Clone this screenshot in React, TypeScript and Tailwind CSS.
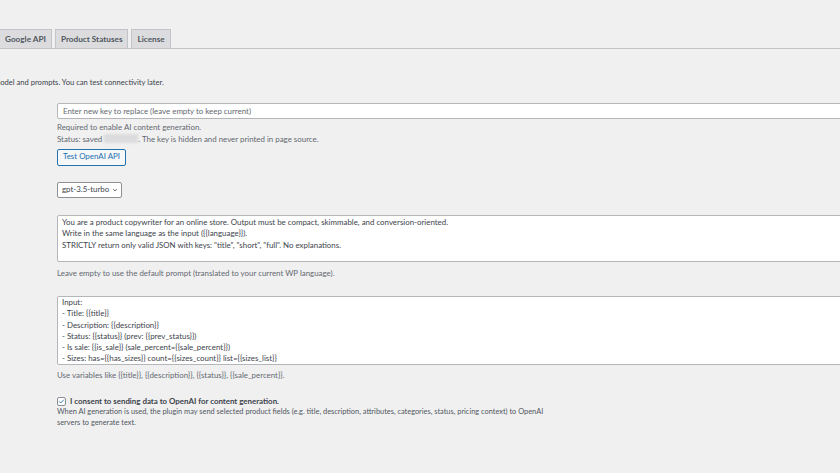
import React from "react";

const font = { fontFamily: 'Lato, "Noto Sans", sans-serif' };

function Tabs() {
  const tabs = ["Google API", "Product Statuses", "License"];
  return (
    <div className="flex gap-[3px] border-b border-[#c3c4c7] pt-[29px]">
      {tabs.map((t, i) => (
        <div
          key={t}
          className={`h-[20px] -mb-px flex items-center border border-[#c3c4c7] bg-[#dcdcde] px-[5px] text-[8.2px] font-bold leading-none text-[#50575e] ${
            i === 0 ? "-ml-px" : ""
          }`}
        >
          {t}
        </div>
      ))}
    </div>
  );
}

function Checkbox() {
  return (
    <span className="mt-[1px] flex h-[9px] w-[9px] shrink-0 items-center justify-center rounded-[2px] border border-[#8c8f94] bg-white">
      <svg viewBox="0 0 20 20" className="h-[9px] w-[9px]">
        <path d="M4 10.5l3.8 3.8L16 5.5" fill="none" stroke="#2271b1" strokeWidth={2.6} strokeLinecap="round" strokeLinejoin="round" />
      </svg>
    </span>
  );
}

export default function App() {
  return (
    <div className="h-[473px] w-[840px] overflow-hidden bg-[#f0f0f1] text-[#3c434a]" style={font}>
      <Tabs />

      <p className="-ml-[6px] mt-[28px] text-[7.6px] leading-[11px]">
        model and prompts. You can test connectivity later.
      </p>

      <div className="pl-[57px]">
        {/* API key */}
        <input
          type="password"
          placeholder="Enter new key to replace (leave empty to keep current)"
          className="mt-[15px] block h-[16px] w-[820px] rounded-[2px] border border-[#b4b6ba] bg-white px-[5px] text-[7.9px] leading-none text-[#3c434a] placeholder:text-[#646970] outline-none"
        />
        <p className="mt-[2.5px] text-[7.9px] leading-[11.5px] text-[#646970]">Required to enable AI content generation.</p>
        <p className="text-[7.9px] leading-[11.5px] text-[#646970]">
          Status: saved{" "}
          <span className="inline-block h-[9px] w-[34px] translate-y-[1px] bg-[#dcdcde] blur-[1px]"></span>
          . The key is hidden and never printed in page source.
        </p>
        <button className="mt-[3px] flex h-[17px] items-center rounded-[2px] border border-[#2271b1] bg-[#f6f7f7] px-[5px] text-[7.9px] leading-none text-[#2271b1]">
          Test OpenAI API
        </button>

        {/* Model */}
        <div className="mt-[16.5px] flex h-[16px] w-[65px] items-center gap-[2px] whitespace-nowrap rounded-[2px] border border-[#8c8f94] bg-white pl-[4px] pr-[3px] text-[7.9px] leading-none">
          <span>gpt-3.5-turbo</span>
          <svg viewBox="0 0 10 10" className="ml-auto h-[6px] w-[6px] shrink-0">
            <path d="M2 3.5l3 3 3-3" fill="none" stroke="#3c434a" strokeWidth={1.4} />
          </svg>
        </div>

        {/* System prompt */}
        <div className="mt-[16.5px] h-[47px] w-[820px] rounded-[2px] border border-[#b4b6ba] bg-white px-[4px] pt-[1.5px] text-[7.9px] leading-[11.3px] whitespace-pre-line">
          {`You are a product copywriter for an online store. Output must be compact, skimmable, and conversion-oriented.
Write in the same language as the input ({{language}}).
STRICTLY return only valid JSON with keys: "title", "short", "full". No explanations.`}
        </div>
        <p className="mt-[6px] text-[7.9px] leading-[11px] text-[#646970]">
          Leave empty to use the default prompt (translated to your current WP language).
        </p>

        {/* User prompt template */}
        <div className="mt-[17px] h-[69px] w-[820px] rounded-[2px] border border-[#b4b6ba] bg-white px-[4px] pt-[0.5px] text-[7.9px] leading-[11.3px] whitespace-pre-line">
          {`Input:
- Title: {{title}}
- Description: {{description}}
- Status: {{status}} (prev: {{prev_status}})
- Is sale: {{is_sale}} (sale_percent={{sale_percent}})
- Sizes: has={{has_sizes}} count={{sizes_count}} list={{sizes_list}}`}
        </div>
        <p className="mt-[5px] text-[7.9px] leading-[11px] text-[#646970]">
          Use variables like {"{{title}}"}, {"{{description}}"}, {"{{status}}"}, {"{{sale_percent}}"}.
        </p>
      </div>

      {/* Consent */}
      <div className="mt-[15.5px] flex">
        <div className="-ml-[197px] w-[197px] shrink-0 text-right text-[7.9px] font-bold leading-[11px]">
          Data consent (GDPR)
        </div>
        <div className="pl-[57px]">
          <label className="flex items-start gap-[4px]">
            <Checkbox />
            <span className="text-[7.9px] font-bold leading-[11px]">
              I consent to sending data to OpenAI for content generation.
            </span>
          </label>
          <p className="w-[495px] text-[7.4px] leading-[10.5px] text-[#50575e]">
            When AI generation is used, the plugin may send selected product fields (e.g. title, description, attributes, categories, status, pricing context) to OpenAI servers to generate text.
          </p>
        </div>
      </div>
    </div>
  );
}
